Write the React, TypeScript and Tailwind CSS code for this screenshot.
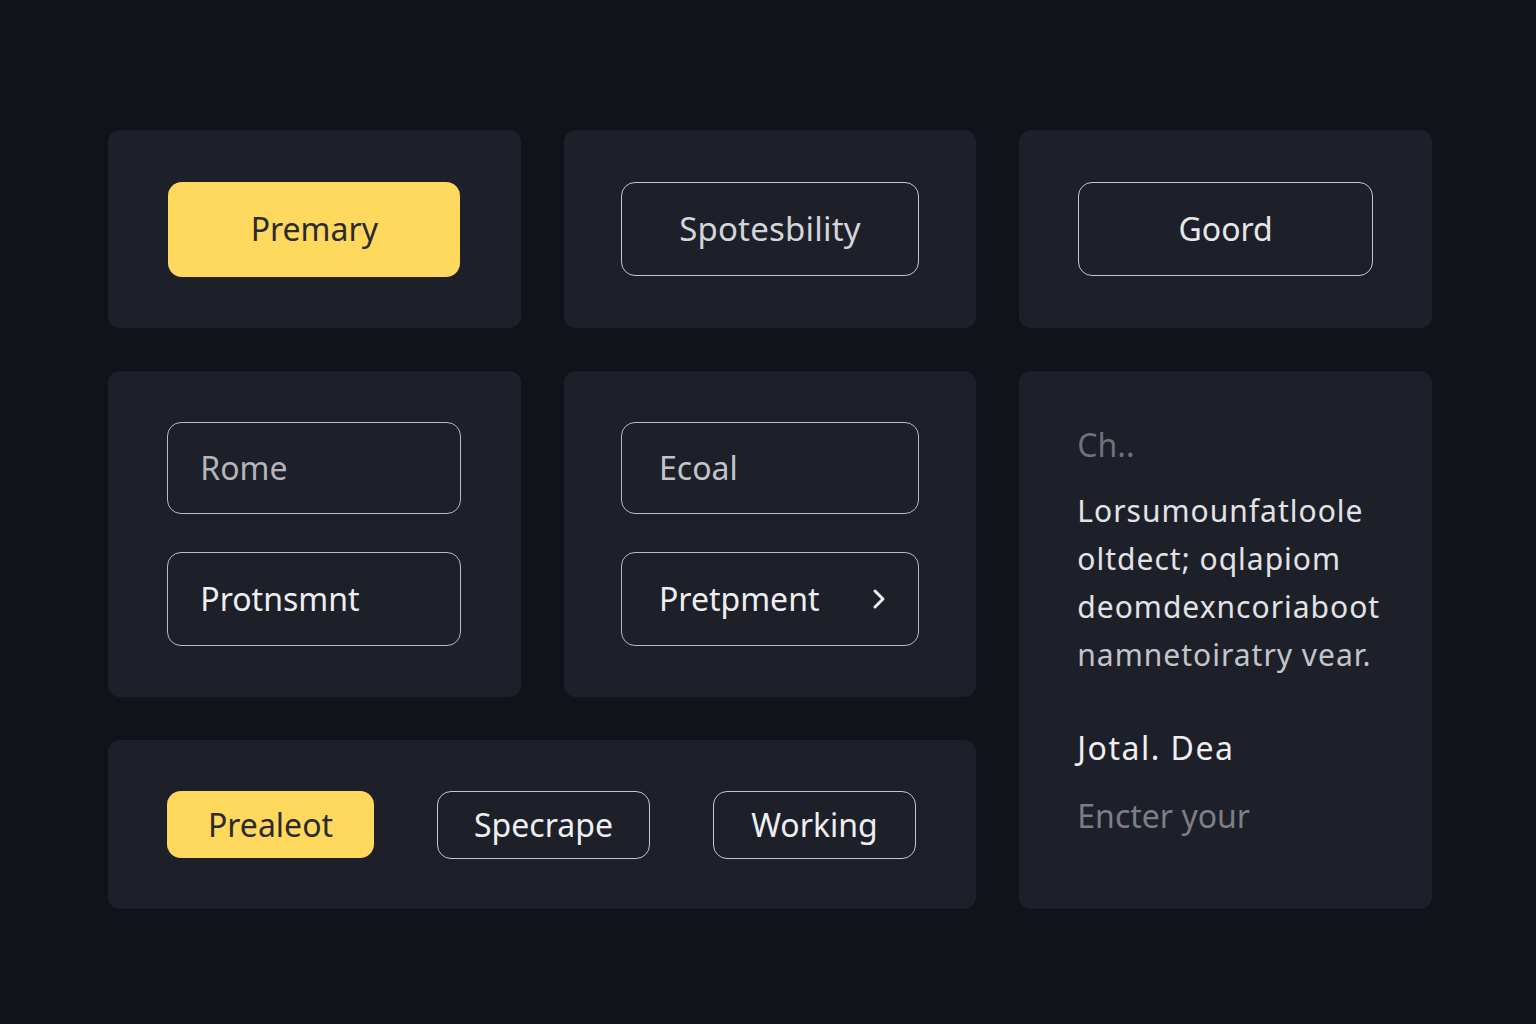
import React from 'react';

const font = { fontFamily: '"Noto Sans", "Open Sans", Arial, sans-serif' };

function Card({ className = '', children }: { className?: string; children?: React.ReactNode }) {
  return <div className={`rounded-xl bg-[#1e2029] ${className}`}>{children}</div>;
}

export default function App() {
  return (
    <div className="min-h-screen w-full bg-[#10131a] pt-[130px] pl-[108px]" style={font}>
      <div className="grid w-[1324px] grid-cols-3 grid-rows-[198px_326px_169px] gap-x-[43px] gap-y-[43px]">
        <Card className="flex items-center justify-center">
          <button className="flex h-[95px] w-[292px] items-center justify-center rounded-[14px] bg-[#ffd85e] text-[32px] text-[#2b2a2a]">
            Premary
          </button>
        </Card>
        <Card className="flex items-center justify-center">
          <button className="flex h-[94px] w-[298px] items-center justify-center rounded-[14px] border border-[#c4c7cd] text-[33px] tracking-[0.2px] text-[#d3d5d9]">
            Spotesbility
          </button>
        </Card>
        <Card className="flex items-center justify-center">
          <button className="flex h-[94px] w-[295px] items-center justify-center rounded-[14px] border border-[#c4c7cd] text-[32px] text-[#e6e7ea]">
            Goord
          </button>
        </Card>

        <Card className="flex flex-col items-center justify-center gap-[38px]">
          <div className="flex h-[92px] w-[294px] items-center rounded-[14px] border border-[#b8bbc2] pl-[32px] text-[32px] text-[#b3b5ba]">
            Rome
          </div>
          <div className="flex h-[94px] w-[294px] items-center rounded-[14px] border border-[#b8bbc2] pl-[32px] text-[32px] text-[#eeeff1]">
            Protnsmnt
          </div>
        </Card>
        <Card className="flex flex-col items-center justify-center gap-[38px]">
          <div className="flex h-[92px] w-[298px] items-center rounded-[14px] border border-[#b8bbc2] pl-[37px] text-[32px] text-[#c2c4c9]">
            Ecoal
          </div>
          <div className="flex h-[94px] w-[298px] items-center justify-between rounded-[14px] border border-[#b8bbc2] pl-[37px] pr-[30px] text-[32px] text-[#eeeff1]">
            <span>Pretpment</span>
            <svg width="18" height="22" viewBox="0 0 18 22" fill="none">
              <path d="M5 3l8 8-8 8" stroke="#eeeff1" strokeWidth="3" strokeLinecap="round" strokeLinejoin="round" />
            </svg>
          </div>
        </Card>
        <Card className="row-span-2 flex flex-col pt-[52px] pl-[58px] pr-[20px]">
          <div className="text-[32px] leading-[44px] text-[#6f727a]">Ch..</div>
          <p className="mt-[20px] whitespace-nowrap text-[30px] leading-[48px] tracking-[1px] text-[#e2e3e6]">
            <span className="block">Lorsumounfatloole</span>
            <span className="block">oltdect; oqlapiom</span>
            <span className="block">deomdexncoriaboot</span>
            <span className="block text-[#c3c5ca]">namnetoiratry vear.</span>
          </p>
          <div className="mt-[47px] text-[32px] leading-[44px] tracking-[1.5px] text-[#eeeff1]">Jotal. Dea</div>
          <div className="mt-[24px] text-[32px] leading-[44px] text-[#7c7f86]">Encter your</div>
        </Card>

        <Card className="col-span-2 flex items-center gap-[63px] pl-[59px]">
          <button className="flex h-[67px] w-[207px] items-center justify-center rounded-[14px] bg-[#ffd85e] text-[32px] text-[#2b2a2a]">
            Prealeot
          </button>
          <button className="flex h-[68px] w-[213px] items-center justify-center rounded-[14px] border border-[#c4c7cd] text-[32px] text-[#eeeff1]">
            Specrape
          </button>
          <button className="flex h-[68px] w-[203px] items-center justify-center rounded-[14px] border border-[#c4c7cd] text-[32px] text-[#eeeff1]">
            Working
          </button>
        </Card>
      </div>
    </div>
  );
}
